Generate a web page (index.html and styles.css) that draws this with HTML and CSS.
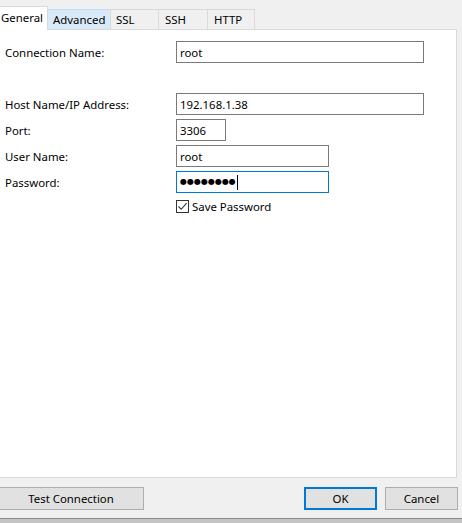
FILE: index.html
```html
<!DOCTYPE html>
<html>
<head>
<meta charset="utf-8">
<link rel="stylesheet" href="styles.css">
</head>
<body>
<div class="dialog">
  <div class="tabs">
    <div class="tab tab-active">General</div>
    <div class="tab tab-hover">Advanced</div>
    <div class="tab tab-ssl">SSL</div>
    <div class="tab tab-ssh">SSH</div>
    <div class="tab tab-http">HTTP</div>
  </div>
  <div class="panel">
    <div class="row row-first">
      <label class="lbl">Connection Name:</label>
      <div class="field w-long">root</div>
    </div>
    <div class="row row-host">
      <label class="lbl">Host Name/IP Address:</label>
      <div class="field w-long">192.168.1.38</div>
    </div>
    <div class="row">
      <label class="lbl">Port:</label>
      <div class="field w-port">3306</div>
    </div>
    <div class="row">
      <label class="lbl">User Name:</label>
      <div class="field w-mid">root</div>
    </div>
    <div class="row">
      <label class="lbl">Password:</label>
      <div class="field w-mid focus"><span class="dots">●●●●●●●●</span><span class="caret"></span></div>
    </div>
    <div class="row row-check">
      <span class="lbl"></span>
      <div class="check">
        <span class="box"><svg width="11" height="11" viewBox="0 0 11 11"><path d="M1.5 5.5 L4.2 8.3 L9.6 2.2" fill="none" stroke="#333" stroke-width="1.1"/></svg></span>
        <span class="check-text">Save Password</span>
      </div>
    </div>
  </div>
  <div class="footer">
    <button class="btn btn-test">Test Connection</button>
    <div class="spacer"></div>
    <button class="btn btn-ok">OK</button>
    <button class="btn btn-cancel">Cancel</button>
  </div>
  <div class="bottom-bar"></div>
</div>
</body>
</html>
```

FILE: styles.css
```css
html, body {
  margin: 0;
  padding: 0;
}
body {
  background: #f0f0f0;
  font-family: "Noto Sans", "Open Sans", sans-serif;
  font-size: 11.4px;
  color: #000;
  width: 462px;
  height: 523px;
  overflow: hidden;
}
.dialog {
  display: flex;
  flex-direction: column;
  height: 523px;
}
.tabs {
  display: flex;
  align-items: flex-end;
  height: 29px;
  margin-left: -1px;
}
.tab {
  box-sizing: border-box;
  height: 20px;
  line-height: 19px;
  border: 1px solid #d9d9d9;
  border-bottom: none;
  background: #f0f0f0;
  padding-left: 4px;
  margin-left: -1px;
  white-space: nowrap;
}
.tab:first-child { margin-left: 0; }
.tab-active {
  background: #fff;
  width: 49px;
  padding-left: 1px;
  line-height: 21px;
  position: relative;
  z-index: 2;
  margin-bottom: -1px;
  height: 24px;
}
.tab-hover {
  background: #d8eaf9;
  border-color: #c5daed;
  width: 64px;
  padding-left: 5px;
}
.tab-ssl { width: 49px; padding-left: 5px; }
.tab-ssh { width: 50px; padding-left: 6px; }
.tab-http { width: 48px; padding-left: 6px; }

.panel {
  box-sizing: border-box;
  background: #fff;
  border: 1px solid #d9d9d9;
  margin-left: -1px;
  width: 458px;
  height: 449px;
  padding-top: 11px;
  position: relative;
  z-index: 1;
}
.row {
  display: flex;
  align-items: center;
  height: 22px;
  margin-bottom: 4px;
}
.row-first { margin-bottom: 30px; }
.lbl {
  width: 171px;
  padding-left: 5px;
  flex: none;
}
.field {
  box-sizing: border-box;
  height: 22px;
  border: 1px solid #7a7a7a;
  padding-left: 3px;
  line-height: 19px;
  display: flex;
  align-items: center;
}
.w-long { width: 248px; }
.w-port { width: 50px; }
.w-mid { width: 153px; }
.focus { border-color: #0078d7; }
.dots {
  font-family: "DejaVu Sans", sans-serif;
  font-size: 8px;
  line-height: 12px;
}
.caret {
  display: inline-block;
  width: 1px;
  height: 15px;
  background: #000;
  margin-left: 1px;
}
.row-check { margin-top: 6px; height: 14px; }
.check {
  display: flex;
  align-items: center;
}
.box {
  box-sizing: border-box;
  width: 13px;
  height: 13px;
  border: 1px solid #333;
  background: #fff;
  display: flex;
  align-items: center;
  justify-content: center;
}
.check-text { margin-left: 3px; }

.footer {
  display: flex;
  align-items: center;
  height: 24px;
  margin-top: 8px;
  padding-right: 4px;
}
.btn {
  box-sizing: border-box;
  height: 23px;
  border: 1px solid #adadad;
  background: #e1e1e1;
  font-family: inherit;
  font-size: 11.4px;
  color: #000;
  padding: 0;
}
.btn-test {
  width: 146px;
  margin-left: -2px;
}
.spacer { flex: 1; }
.btn-ok {
  width: 73px;
  border: 2px solid #0078d7;
  margin-right: 8px;
}
.btn-cancel {
  width: 73px;
}
.bottom-bar {
  margin-top: auto;
  height: 4px;
  background: #c4c4c4;
  border-top: 1px solid #8c8c8c;
}
```
